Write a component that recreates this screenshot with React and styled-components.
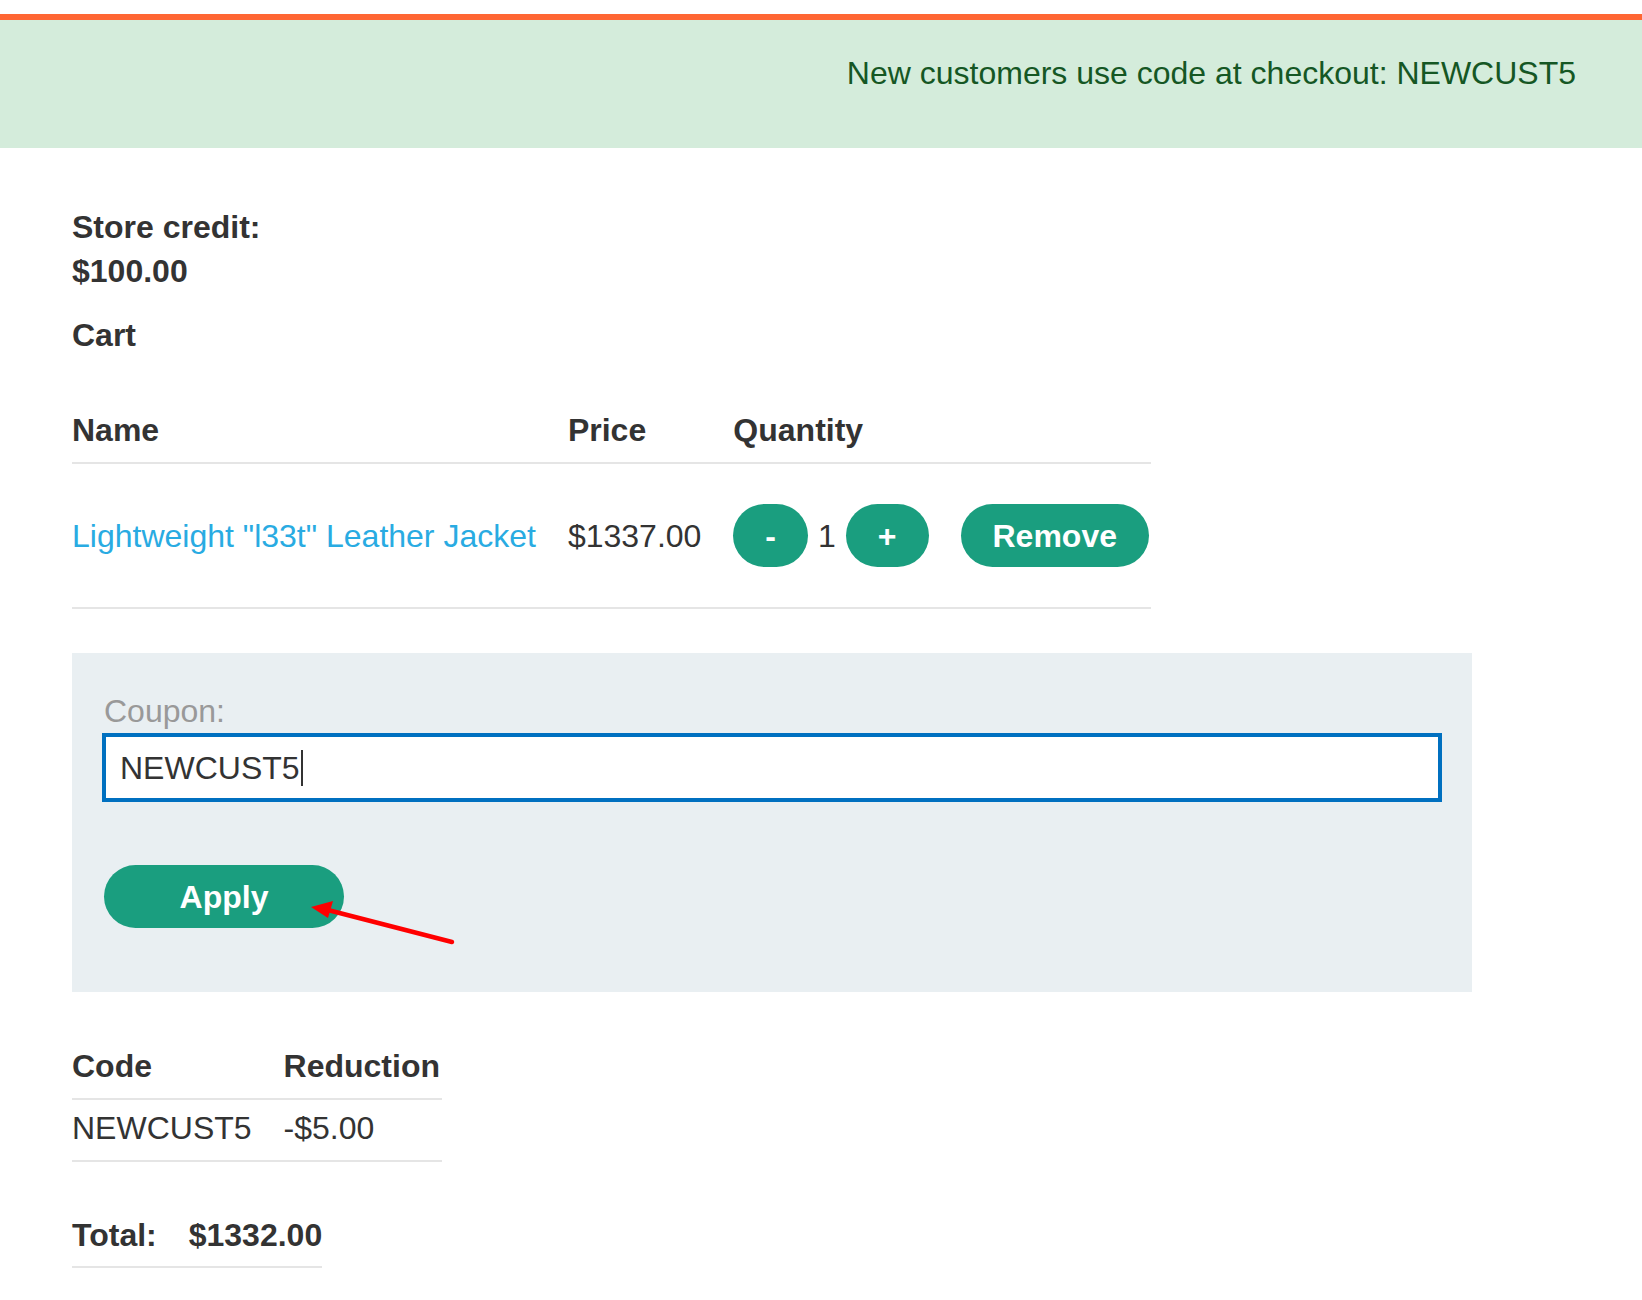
import React from 'react'
import styled, { createGlobalStyle } from 'styled-components'

const GlobalStyle = createGlobalStyle`
  html, body {
    margin: 0;
    padding: 0;
    background: #fff;
  }
  body {
    font-family: "Liberation Sans", Arial, Helvetica, sans-serif;
    font-size: 32px;
    line-height: 44px;
    color: #333;
  }
`

const Page = styled.div`
  padding-top: 14px;
`

const Banner = styled.div`
  border-top: 6px solid #ff6633;
  background: #d4ecdb;
  color: #155724;
  height: 134px;
  box-sizing: border-box;
  padding: 31px 66px 0 0;
  text-align: right;
  font-size: 32px;
  line-height: 44px;
`

const Main = styled.main`
  padding: 57px 0 40px 72px;
`

const Label = styled.div`
  font-weight: 700;
  margin-top: ${({ top }) => top || 0}px;
`

const Table = styled.table`
  border-collapse: collapse;
  margin-top: ${({ top }) => top || 0}px;
`

const Th = styled.th`
  text-align: left;
  font-weight: 700;
  padding: 0 ${({ last }) => (last ? 2 : 32)}px 10px 0;
  border-bottom: 2px solid #e5e5e5;
  white-space: nowrap;
`

const Td = styled.td`
  padding: ${({ tall }) => (tall ? '40px' : '6px')} ${({ last }) => (last ? 2 : 32)}px
    ${({ tall }) => (tall ? '40px' : '10px')} 0;
  border-bottom: 2px solid #e5e5e5;
  vertical-align: middle;
  white-space: nowrap;
`

const ProductLink = styled.a`
  color: #29abe2;
  text-decoration: none;
`

const Qty = styled.div`
  display: flex;
  align-items: center;
  gap: 10px;
`

const Button = styled.button`
  display: inline-flex;
  align-items: center;
  justify-content: center;
  height: 63px;
  padding: 0 32px;
  width: ${({ wide }) => (wide ? '240px' : 'auto')};
  margin-left: ${({ wide }) => (wide ? '2px' : '0')};
  border: none;
  border-radius: 32px;
  background: #1a9e7f;
  color: #fff;
  font-family: inherit;
  font-size: 32px;
  font-weight: 700;
  line-height: 1;
  cursor: pointer;
`

const CouponBox = styled.section`
  position: relative;
  width: 1400px;
  box-sizing: border-box;
  margin-top: 44px;
  padding: 36px 30px 64px;
  background: #e9eff2;
`

const CouponLabel = styled.label`
  display: block;
  margin-left: 2px;
  color: #999;
`

const Field = styled.div`
  display: flex;
  align-items: center;
  height: 69px;
  box-sizing: border-box;
  padding: 0 14px;
  border: 4px solid #0070c0;
  background: #fff;
  margin-bottom: 63px;
`

const Caret = styled.span`
  display: inline-block;
  width: 2px;
  height: 36px;
  margin-left: 1px;
  background: #333;
`

const Arrow = styled.svg`
  position: absolute;
  left: 230px;
  top: 240px;
  overflow: visible;
`

const TotalTable = styled(Table)`
  font-weight: 700;
`

const TotalCell = styled.td`
  padding: 0 ${({ last }) => (last ? 0 : 32)}px 9px 0;
  border-bottom: 2px solid #e5e5e5;
  white-space: nowrap;
`

export default function App() {
  return (
    <Page>
      <GlobalStyle />
      <Banner>New customers use code at checkout: NEWCUST5</Banner>
      <Main>
        <Label>
          Store credit:
          <br />
          $100.00
        </Label>
        <Label top={20}>Cart</Label>

        <Table top={51}>
          <thead>
            <tr>
              <Th>Name</Th>
              <Th>Price</Th>
              <Th>Quantity</Th>
              <Th last />
            </tr>
          </thead>
          <tbody>
            <tr>
              <Td tall>
                <ProductLink href="#">Lightweight "l33t" Leather Jacket</ProductLink>
              </Td>
              <Td tall>$1337.00</Td>
              <Td tall>
                <Qty>
                  <Button>-</Button>
                  1
                  <Button>+</Button>
                </Qty>
              </Td>
              <Td tall last>
                <Button>Remove</Button>
              </Td>
            </tr>
          </tbody>
        </Table>

        <CouponBox>
          <CouponLabel>Coupon:</CouponLabel>
          <Field>
            NEWCUST5
            <Caret />
          </Field>
          <Button wide>Apply</Button>
          <Arrow width="160" height="60" viewBox="230 240 160 60">
            <line x1="380" y1="289" x2="252" y2="256" stroke="#ff0000" strokeWidth="4.5" strokeLinecap="round" />
            <polygon points="239,254 261,248 256,265" fill="#ff0000" />
          </Arrow>
        </CouponBox>

        <Table top={52}>
          <thead>
            <tr>
              <Th>Code</Th>
              <Th last>Reduction</Th>
            </tr>
          </thead>
          <tbody>
            <tr>
              <Td>NEWCUST5</Td>
              <Td last>-$5.00</Td>
            </tr>
          </tbody>
        </Table>

        <TotalTable top={51}>
          <tbody>
            <tr>
              <TotalCell>Total:</TotalCell>
              <TotalCell last>$1332.00</TotalCell>
            </tr>
          </tbody>
        </TotalTable>
      </Main>
    </Page>
  )
}
